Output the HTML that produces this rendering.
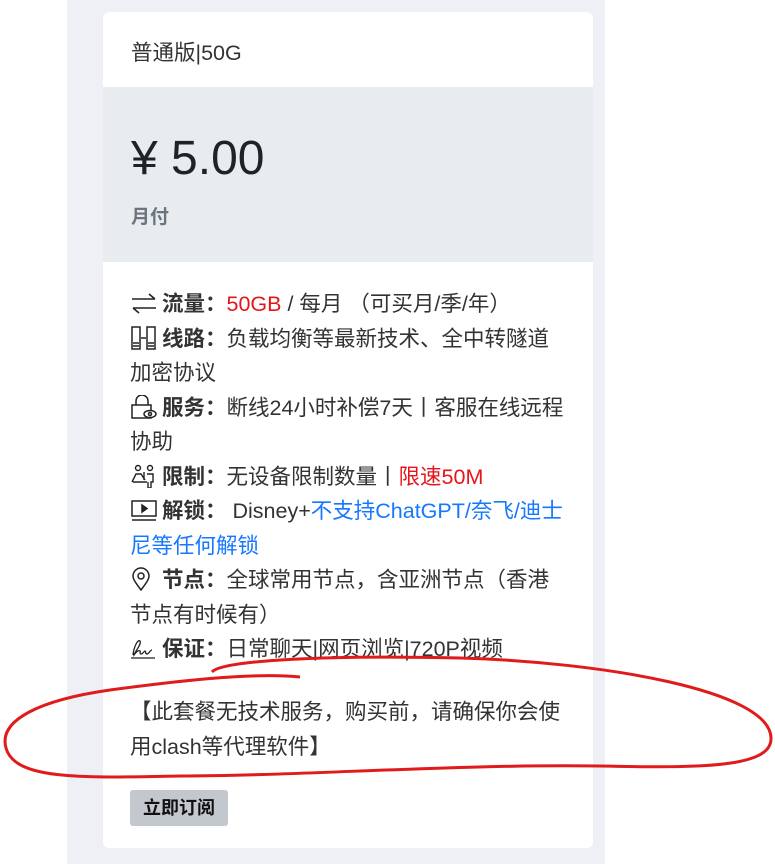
<!DOCTYPE html>
<html><head><meta charset="utf-8"><style>
*{margin:0;padding:0;box-sizing:border-box}
body{width:775px;height:864px;background:#fff;font-family:"Liberation Sans","Noto Sans CJK SC",sans-serif;position:relative;overflow:hidden;color:#212529}
.panel{position:absolute;left:67px;top:0;width:538px;height:864px;background:#eef0f5}
.card{position:absolute;left:103px;top:12px;width:490px;height:836px;background:#fff;border-radius:6px;overflow:hidden}
.hd{height:75px;padding-left:28px;font-size:21.5px;line-height:82px;color:#333}
.price{height:175px;background:#e9ecef;padding-left:28px}
.p1{font-size:48px;padding-top:45px;line-height:54px;color:#1f2328}
.p2{font-size:19px;font-weight:bold;color:#6c757d;margin-top:16px}
.feat{position:absolute;left:27px;top:275px;font-size:21.5px;line-height:34.5px;color:#333;white-space:nowrap}
.feat b{font-weight:bold;color:#333}
.r{color:#e5161b}.bl{color:#1677ff}
.ic{display:inline-block;width:28px;height:24px;vertical-align:-4px;margin-right:4px}
.note{position:absolute;left:27px;top:683px;font-size:21.5px;line-height:35px;color:#333;white-space:nowrap}
.btn{position:absolute;left:27px;top:778px;width:98px;height:36px;background:#c3c7ce;border-radius:3px;font-size:18px;font-weight:bold;line-height:36px;text-align:center;color:#111}
svg.ov{position:absolute;left:0;top:0}
</style></head><body>
<div class="panel"></div>
<div class="card">
<div class="hd">普通版|50G</div>
<div class="price"><div class="p1">¥ 5.00</div><div class="p2">月付</div></div>
<div class="feat">
<svg class="ic" viewBox="0 0 28 24" fill="none" stroke="#222" stroke-width="1.6"><path d="M2 8H25M19 3l6 5"/><path d="M26 17H3M9 22l-6-5"/></svg><b>流量：</b><span class="r">50GB</span> / 每月 （可买月/季/年）<br>
<svg class="ic" viewBox="0 0 28 24" fill="none" stroke="#222" stroke-width="1.5"><rect x="2" y="1" width="8" height="22"/><rect x="17" y="1" width="8" height="22"/><path d="M11 12h5M3 17h6M3 20h6M18 17h6M18 20h6"/></svg><b>线路：</b>负载均衡等最新技术、全中转隧道<br>加密协议<br>
<svg class="ic" viewBox="0 0 28 24" fill="none" stroke="#222" stroke-width="1.5"><path d="M6 10V6a6 6 0 0 1 12 0v4"/><rect x="2" y="10" width="19" height="13"/><ellipse cx="20" cy="19" rx="6" ry="3.5" fill="#fff"/><circle cx="20" cy="19" r="1.5"/></svg><b>服务：</b>断线24小时补偿7天丨客服在线远程<br>协助<br>
<svg class="ic" viewBox="0 0 28 24" fill="none" stroke="#222" stroke-width="1.4"><circle cx="8" cy="4" r="2.5"/><circle cx="20" cy="4" r="2.5"/><path d="M2 18l4-8h5l4 6M3 18h14M17 10h6v8h-2v6h-3v-6M14 8v8"/></svg><b>限制：</b>无设备限制数量丨<span class="r">限速50M</span><br>
<svg class="ic" viewBox="0 0 28 24" fill="none" stroke="#222" stroke-width="1.5"><rect x="2" y="3" width="24" height="15"/><path d="M2 22h24"/><path d="M12 7l5 3.5-5 3.5z" fill="#222"/></svg><b>解锁：</b> Disney+<span class="bl">不支持ChatGPT/奈飞/迪士</span><br><span class="bl">尼等任何解锁</span><br>
<svg class="ic" viewBox="0 0 28 24" fill="none" stroke="#222" stroke-width="1.5"><path d="M11 23C5 15 3 12 3 9a8 8 0 0 1 16 0c0 3-2 6-8 14z"/><circle cx="11" cy="9" r="3"/></svg><b>节点：</b>全球常用节点，含亚洲节点（香港<br>节点有时候有）<br>
<svg class="ic" viewBox="0 0 28 24" fill="none" stroke="#222" stroke-width="1.3"><path d="M3 19C4 10 8 3 10 5c2 3-6 12-6 14 3-4 5-5 6-4s-1 3 1 3 3-3 4-3 0 3 2 3 3-4 5-4"/><path d="M1 22h24"/></svg><b>保证：</b>日常聊天|网页浏览|720P视频
</div>
<div class="note">【此套餐无技术服务，购买前，请确保你会使<br>用clash等代理软件】</div>
<div class="btn">立即订阅</div>
</div>
<svg class="ov" width="775" height="864"><path d="M212 672 C222 660 330 655 460 658 C600 662 770 690 771 738 C772 768 700 768 600 766 C450 764 300 776 180 776 C80 778 15 780 6 748 C-2 720 40 700 110 690 C170 682 250 672 300 677" fill="none" stroke="#e01b1b" stroke-width="3"/></svg>
</body></html>
